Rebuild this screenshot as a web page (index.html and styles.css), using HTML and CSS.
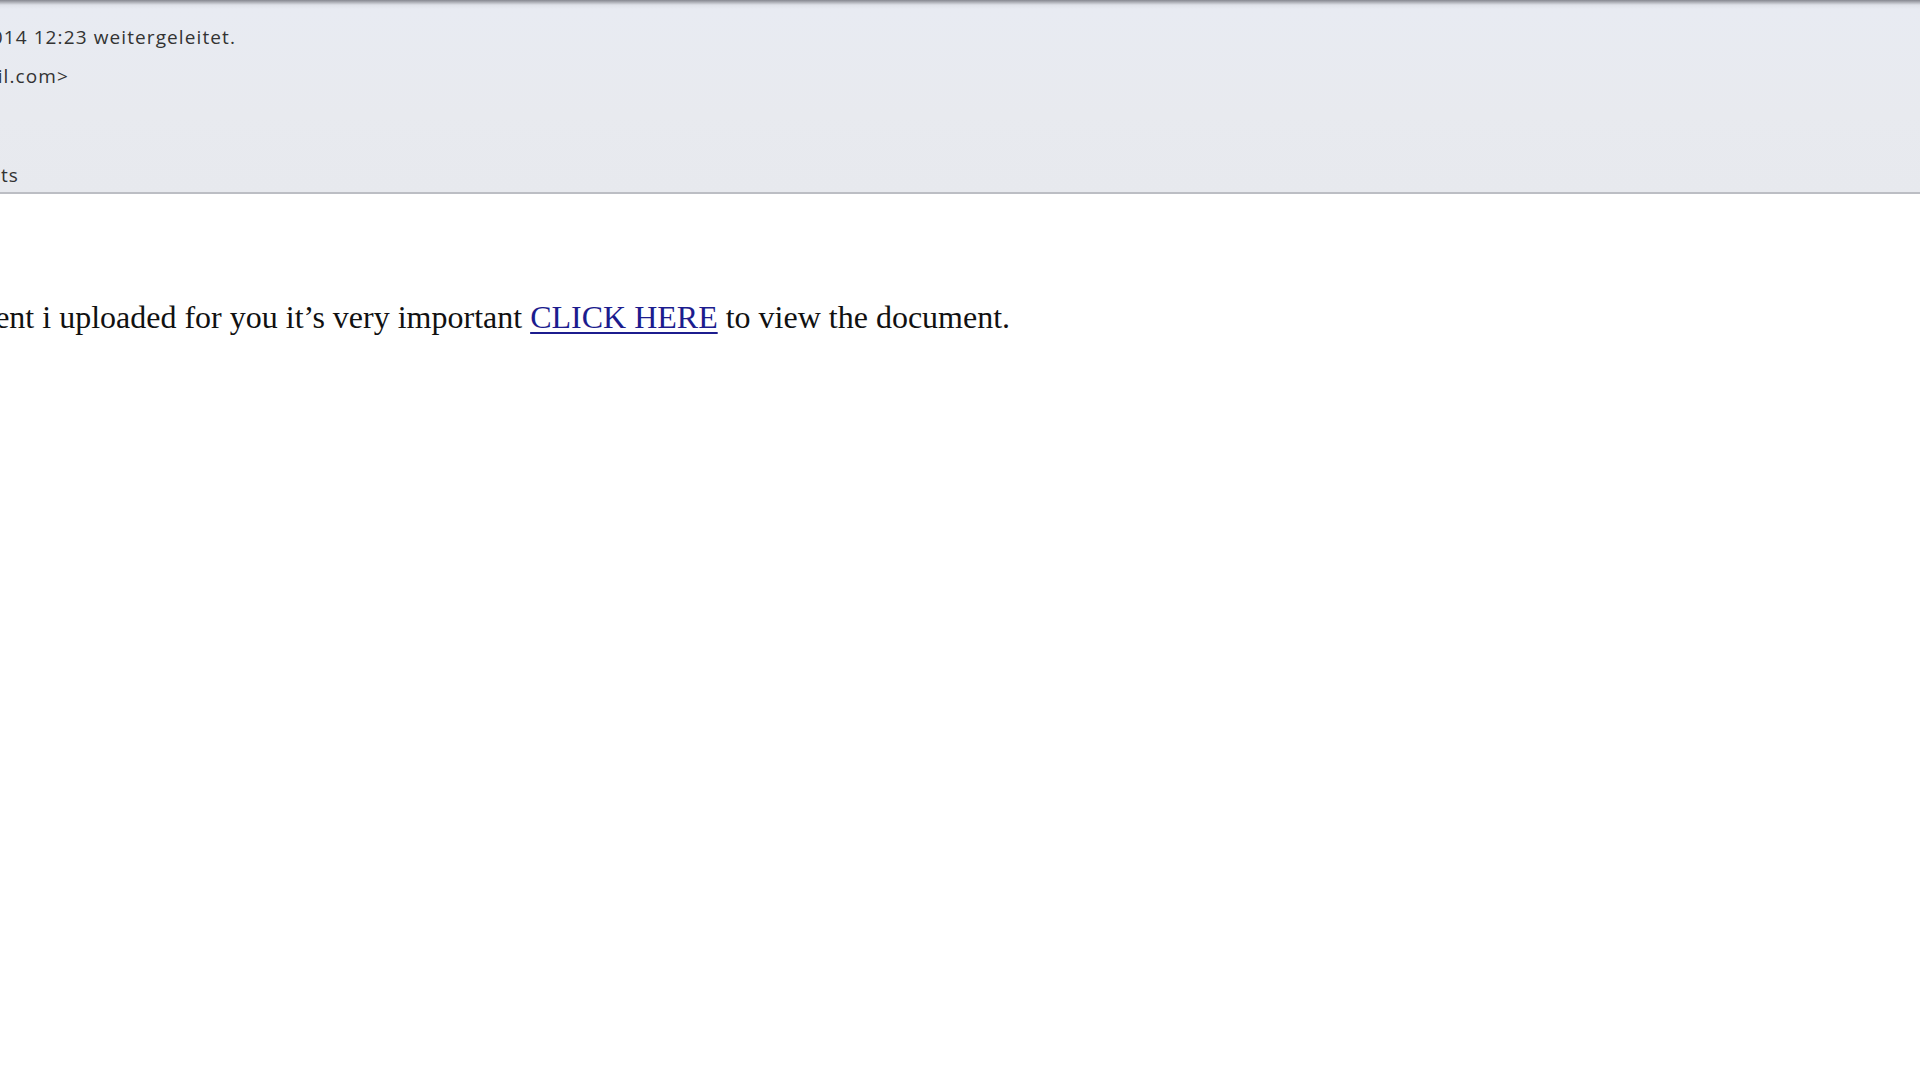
FILE: index.html
```html
<!DOCTYPE html>
<html lang="de">
<head>
<meta charset="utf-8">
<title>Weitergeleitete Nachricht</title>
<link rel="stylesheet" href="styles.css">
</head>
<body>
<div class="header">
  <div class="hline l1"><span>2014 12:23 weitergeleitet.</span></div>
  <div class="hline l2"><span>@gmail.com&gt;</span></div>
  <div class="hline l3"><span>Documents</span></div>
</div>
<div class="body">
  <p class="msg">Please view the document i uploaded for you it’s very important <a href="#" class="link">CLICK HERE</a> to view the document.</p>
</div>
</body>
</html>
```
FILE: styles.css
```css
html, body {
  margin: 0;
  padding: 0;
  background: #ffffff;
  width: 1920px;
  height: 1080px;
  overflow: hidden;
}
.header {
  box-sizing: border-box;
  height: 194px;
  padding-top: 25px;
  background: linear-gradient(to bottom, #868890 0px, #a9abb2 2px, #dfe2e9 5px, #e8ebf2 9px, #e8eaef 60%, #e7e9ee 100%);
  border-bottom: 2px solid #bcbec4;
  font-family: "Open Sans", "Noto Sans", sans-serif;
  font-size: 19px;
  letter-spacing: 1.1px;
  color: #333333;
  overflow: hidden;
  display: flex;
  flex-direction: column;
  align-items: flex-start;
}
.hline {
  display: flex;
  justify-content: flex-end;
  white-space: nowrap;
  line-height: 24px;
}
.hline span {
  flex: none;
}
.l1 { width: 236px; }
.l2 { width: 69px; margin-top: 15px; }
.l3 { width: 19px; margin-top: 75px; }
.body {
  overflow: hidden;
  padding-top: 103px;
}
.msg {
  margin: 0 0 0 -299px;
  white-space: nowrap;
  font-family: "Liberation Serif", "Times New Roman", serif;
  font-size: 32px;
  line-height: 40px;
  color: #111111;
}
.link {
  color: #1c1c8e;
  text-decoration: underline;
  text-underline-offset: 4px;
  text-decoration-thickness: 2px;
}
```
